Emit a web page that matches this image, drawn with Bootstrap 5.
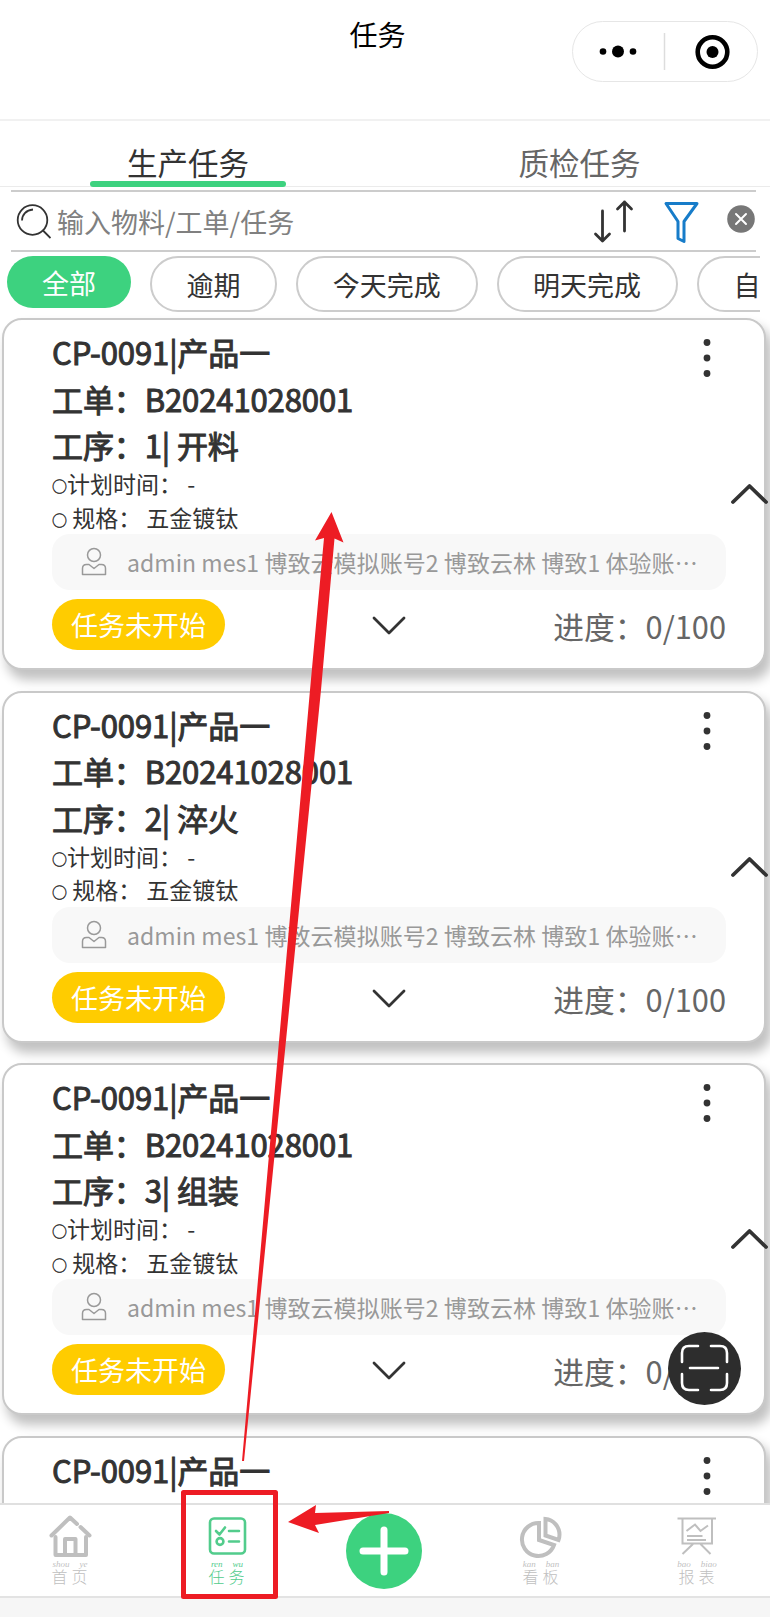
<!DOCTYPE html>
<html lang="zh-CN">
<head>
<meta charset="utf-8">
<meta name="viewport" content="width=device-width, initial-scale=1">
<title>任务</title>
<link href="https://cdn.jsdelivr.net/npm/bootstrap@5.3.0/dist/css/bootstrap.min.css" rel="stylesheet">
<style>
body{font-family:"Noto Sans CJK SC",sans-serif;color:#333;background:#fff;height:1617px;overflow:hidden;line-height:1}
svg{display:block;fill:none;flex:none}
.app{height:1617px}
.topbar{height:121px;border-bottom:2px solid #f1f1f1}
.page-title{font-size:28px;line-height:68px;color:#000;padding-right:15px}
.capsule{right:12px;top:20.5px;width:186px;height:61px;border:1.5px solid #e6e6e6;border-radius:31px}
.tabs{height:66px;border-bottom:1.5px solid #ebebeb}
.tab-item{width:394px;padding-left:13px;font-size:30.5px;line-height:83px;color:#666}
.tab-item:first-child{width:376px;padding-left:0;color:#333}
.tab-line{left:90px;top:60px;width:196px;height:6px;border-radius:3px;background:#3dd27f}
.search{margin:3px 14px 0 11px;height:62px;border:solid #ccc;border-width:2px 0}
.search-hint{font-size:27px;color:#808080;margin-left:6px;padding-top:1px}
.chips{height:57px;margin:4px 10px 0 7px;overflow:hidden;gap:19px}
.chip{height:56px;border:2px solid #ccc;border-radius:28px;font-size:27px;line-height:53px;white-space:nowrap;flex:none;text-align:center}
.chip.on{width:124px;height:52px;line-height:54px;background:#3dd27f;color:#fff;border:0}
.feed{height:1190px;overflow:hidden;padding:5px 4px 0 2px}
.task{height:352px;margin-bottom:20.7px;border:2px solid #c9c9c9;border-radius:20px;background:#fff;box-shadow:5px 9px 11px 1px #c2c2c2;padding:10px 38px 0 48px;flex:none}
.head-line{font-size:31px;height:46.5px;line-height:44px;-webkit-text-stroke:1px #333;white-space:pre;letter-spacing:-.1px}
.info{font-size:23px;height:33.5px;line-height:33px;white-space:pre}
.head-line + .info{margin-top:-2.5px}
.ring{font-size:15px;vertical-align:1px;-webkit-text-stroke:.4px #333}
.people{height:56px;border-radius:18px;background:#f8f8f8;color:#999;font-size:23px;padding:0 24px 0 29px;margin:0 0 9px 0;line-height:58px;white-space:nowrap}
.state{width:173px;height:51px;border-radius:26px;background:#fc0;color:#fff;font-size:27px;line-height:52px;text-align:center}
.progress-text{font-size:30.8px;color:#666;line-height:53px}
.more{right:53px;top:18px}
.fold{right:-4px;top:162px}
.tabbar{height:93px;border-top:2px solid #e0e0e0;background:#fff}
.nav-cell{color:#bfbfbf;width:60px}
.nav-cell svg{margin-top:9px}
.cap{font-size:16px;letter-spacing:4px;line-height:16px;font-weight:300;margin:0 0 0 3px}
.py{font:italic 9px/8px "Liberation Serif",serif;gap:10px;margin-top:0;height:8px}
.foot{background:#f6f6f6;border-top:2px solid #e3e3e3}
.scan{left:668px;top:1332px}
.marks{left:0;top:0}
</style>
</head>
<body>
<div class="app position-relative d-flex flex-column">
  <header class="topbar position-relative text-center flex-shrink-0">
    <div class="page-title">任务</div>
    <div class="capsule position-absolute">
      <svg width="184" height="59" viewBox="573 21 184 59"><path d="M664.500 32v37" stroke="#ddd" stroke-width="1.5"/><g fill="#000"><circle cx="603" cy="50.500" r="3.3"/><circle cx="618" cy="50.500" r="6"/><circle cx="633" cy="50.500" r="3.3"/><circle cx="712.5" cy="51" r="6"/></g><circle cx="712.5" cy="51" r="14.8" stroke="#000" stroke-width="4.6"/></svg>
    </div>
  </header>
  <nav class="tabs position-relative d-flex text-center flex-shrink-0">
    <div class="tab-item">生产任务</div><div class="tab-item">质检任务</div>
    <span class="tab-line position-absolute"></span>
  </nav>
  <div class="search d-flex align-items-center flex-shrink-0">
    <svg width="40" height="40" viewBox="0 0 40 40" stroke="#333" stroke-width="1.8"><circle cx="21.5" cy="19" r="14.8"/><path d="M31.500 29l8 8M11 19.500c0-5.500 4-10.500 11-11"/></svg>
    <span class="search-hint flex-grow-1">输入物料/工单/任务</span>
    <svg width="165" height="54" viewBox="591 194 165 54"><path d="M602.500 211v30m-7-7 7 7 7-7M624.500 231v-29m-7 7 7-7 7 7" stroke="#333" stroke-width="2.800" stroke-linecap="round" stroke-linejoin="round"/><path d="M666 203.500h31l-13 18v20l-6-3v-17z" stroke="#177cc9" stroke-width="3" stroke-linejoin="round"/><circle cx="741" cy="219" r="13.800" fill="#777"/><path d="M736 214l10 10m0-10-10 10" stroke="#fff" stroke-width="2" stroke-linecap="round"/></svg>
  </div>
  <div class="chips d-flex flex-shrink-0">
    <div class="chip on">全部</div><div class="chip" style="width:127px">逾期</div><div class="chip" style="width:181.500px">今天完成</div><div class="chip" style="width:181px">明天完成</div><div class="chip" style="width:182px;text-align:left;padding-left:35px">自</div>
  </div>
  <main class="feed d-flex flex-column flex-shrink-0" id="feed"></main>
  <nav class="tabbar d-flex flex-shrink-0 position-relative">
    <div class="nav-cell d-flex flex-column align-items-center" style="margin-left:40px">
      <svg width="44" height="46" viewBox="48 1514 44 46" stroke="#bfbfbf" stroke-width="4" stroke-linecap="round" stroke-linejoin="round"><path d="M51.500 1535.500 70 1517.500l7 6.500M80.500 1527l9 8.500"/><path d="M55.500 1537v18h30.500v-18M65 1555v-16h10.500v16"/></svg>
      <div class="py d-flex"><span>shou</span><span>ye</span></div><div class="cap">首页</div>
    </div>
    <div class="nav-cell d-flex flex-column align-items-center" style="margin-left:97px;color:#52cc8c">
      <svg width="44" height="46" viewBox="205 1514 44 46" stroke="#52cc8c" stroke-width="2.600" stroke-linecap="round" stroke-linejoin="round"><rect x="210" y="1518.500" width="35" height="35" rx="4"/><path d="M216 1531l3.500 3.500 5.500-7M229 1531h10M229 1541.500h10"/><circle cx="220" cy="1541.500" r="3.400"/></svg>
      <div class="py d-flex"><span>ren</span><span>wu</span></div><div class="cap">任务</div>
    </div>
    <svg width="76" height="76" viewBox="0 0 76 76" style="margin:8px 0 0 89px"><circle cx="38" cy="38" r="38" fill="#3dd27f"/><path d="M38 17v42M17 38h42" stroke="#fff" stroke-width="7" stroke-linecap="round"/></svg>
    <div class="nav-cell d-flex flex-column align-items-center" style="margin-left:89px">
      <svg width="44" height="46" viewBox="518.500 1514 44 46" stroke="#bfbfbf" stroke-width="4"><path d="M538.500 1523a16.500 16.500 0 1 0 15 22l-15-5z"/><path d="M545 1519c8 .5 14 8 14 15.500q0 3-1 5.500l-13-4.500z"/></svg>
      <div class="py d-flex"><span>kan</span><span>ban</span></div><div class="cap">看板</div>
    </div>
    <div class="nav-cell d-flex flex-column align-items-center" style="margin-left:96px">
      <svg width="44" height="46" viewBox="675.500 1514 44 46" stroke="#bfbfbf" stroke-width="2"><path d="M678 1518.500h38.500M683 1519v24.500h29.500V1519M693.500 1544l-10.500 10M701 1544l10 10M687 1531l8.500-6.500 5.500 6.500 7.500-5.500M687.500 1536h15.500M687.500 1540h19"/></svg>
      <div class="py d-flex"><span>bao</span><span>biao</span></div><div class="cap">报表</div>
    </div>
  </nav>
  <div class="foot flex-grow-1"></div>
  <svg class="scan position-absolute" width="73" height="73" viewBox="0 0 73 73"><circle cx="36.500" cy="36.500" r="36.500" fill="#2d2d2d"/><path d="M14 30v-9q0-7 7-7h9M43 14h9q7 0 7 7v9M59 42v9q0 7-7 7h-9M30 58h-9q-7 0-7-7v-9M22 36h28" stroke="#fff" stroke-width="2.600" stroke-linecap="round"/></svg>
  <svg class="marks position-absolute" width="770" height="1617" viewBox="0 0 770 1617"><path fill="#ed1c24" d="M331.500 512 343.500 542.500 334.500 538.500 321 690 244 1461h-2L310 690 324 538 315 540.500zM288 1522 316 1505 315 1513 389 1511v2L315 1525 319 1533z"/><rect x="183.500" y="1492.500" width="92" height="104" stroke="#ed1c24" stroke-width="5" stroke-linejoin="round"/></svg>
</div>
<script>
const steps = ['1| 开料', '2| 淬火', '3| 组装', null];
const more = `<svg class="more position-absolute" width="8" height="40" viewBox="0 0 8 40" style="fill:#333"><circle cx="4" cy="4.500" r="3.400"/><circle cx="4" cy="20" r="3.400"/><circle cx="4" cy="35.500" r="3.400"/></svg>`;
document.getElementById('feed').innerHTML = steps.map(s => `
<article class="task position-relative">
  <div class="head-line">CP-0091|产品一</div>${more}
  ${s ? `<div class="head-line">工单：B20241028001</div>
  <div class="head-line">工序：${s}</div>
  <div class="info"><span class="ring">○</span>计划时间： -</div>
  <div class="info"><span class="ring">○</span> 规格： 五金镀钛</div>
  <div class="people d-flex align-items-center"><svg width="26" height="30" viewBox="0 0 26 30" stroke="#999" stroke-width="1.500" stroke-linejoin="round"><circle cx="13" cy="8" r="6.500"/><path d="M1.500 27.500v-6q0-4 4-4h2.500l5 4 5-4h2.500q4 0 4 4v6z"/></svg><span style="margin-left:20px;letter-spacing:.06px">admin mes1 博致云模拟账号2 博致云林 博致1 体验账⋯</span></div>
  <div class="d-flex justify-content-between">
    <div class="state">任务未开始</div>
    <svg width="34" height="20" viewBox="0 0 34 20" style="margin:17px 0 0 -1px" stroke="#333" stroke-width="2.800" stroke-linecap="round" stroke-linejoin="round"><path d="M2 2l15 15L32 2"/></svg>
    <div class="progress-text">进度：0/100</div>
  </div>
  <svg class="fold position-absolute" width="38" height="24" viewBox="0 0 38 24" stroke="#333" stroke-width="3.800" stroke-linecap="round" stroke-linejoin="round"><path d="M3 20 19.500 4 36 20"/></svg>` : ''}
</article>`).join('');
</script>
<script src="https://cdn.jsdelivr.net/npm/bootstrap@5.3.0/dist/js/bootstrap.bundle.min.js"></script>
</body>
</html>
